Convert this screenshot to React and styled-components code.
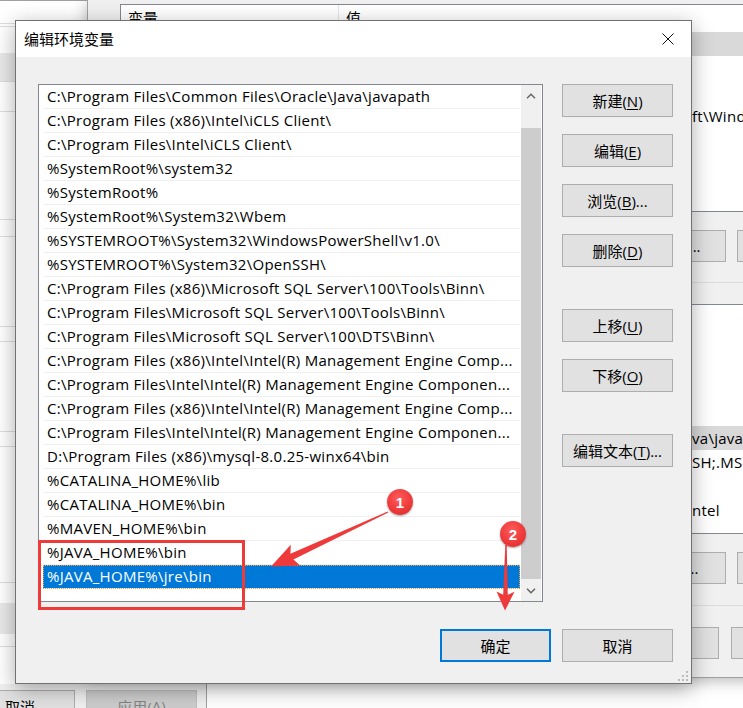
import React from "react";
import styled, { createGlobalStyle } from "styled-components";

const GlobalStyle = createGlobalStyle`
  html, body {
    margin: 0;
    padding: 0;
    background: #fff;
  }
  body {
    font-family: "Open Sans", "Noto Sans CJK SC", sans-serif;
    font-size: 15px;
    color: #000;
  }
  * {
    box-sizing: border-box;
  }
`;

const paths = [
  "C:\\Program Files\\Common Files\\Oracle\\Java\\javapath",
  "C:\\Program Files (x86)\\Intel\\iCLS Client\\",
  "C:\\Program Files\\Intel\\iCLS Client\\",
  "%SystemRoot%\\system32",
  "%SystemRoot%",
  "%SystemRoot%\\System32\\Wbem",
  "%SYSTEMROOT%\\System32\\WindowsPowerShell\\v1.0\\",
  "%SYSTEMROOT%\\System32\\OpenSSH\\",
  "C:\\Program Files (x86)\\Microsoft SQL Server\\100\\Tools\\Binn\\",
  "C:\\Program Files\\Microsoft SQL Server\\100\\Tools\\Binn\\",
  "C:\\Program Files\\Microsoft SQL Server\\100\\DTS\\Binn\\",
  "C:\\Program Files (x86)\\Intel\\Intel(R) Management Engine Comp...",
  "C:\\Program Files\\Intel\\Intel(R) Management Engine Componen...",
  "C:\\Program Files (x86)\\Intel\\Intel(R) Management Engine Comp...",
  "C:\\Program Files\\Intel\\Intel(R) Management Engine Componen...",
  "D:\\Program Files (x86)\\mysql-8.0.25-winx64\\bin",
  "%CATALINA_HOME%\\lib",
  "%CATALINA_HOME%\\bin",
  "%MAVEN_HOME%\\bin",
  "%JAVA_HOME%\\bin",
  "%JAVA_HOME%\\jre\\bin",
];

// faint stripes of the window sitting furthest back (only its left edge shows)
const leftStripes = [
  { h: 22, line: true },
  { h: 2, line: true },
  { h: 26 },
  { h: 28, gray: true, line: true },
  { h: 29, line: true },
  { h: 107, line: true },
  { h: 16, line: true },
  { h: 89, line: true },
  { h: 14, line: true },
  { h: 89, line: true },
  { h: 14, line: true },
  { h: 135, line: true },
  { h: 20 },
  { h: 31, gray: true },
  { h: 12, line: true },
  { h: 37 },
];

const Chevron = ({ up }) => (
  <svg width="10" height="6" viewBox="0 0 10 6">
    <polyline
      points={up ? "1,5.2 5,1.2 9,5.2" : "1,0.8 5,4.8 9,0.8"}
      fill="none"
      stroke="#606060"
      strokeWidth="1.4"
    />
  </svg>
);

const App = () => {
  return (
    <>
      <GlobalStyle />
      <Desktop>
        {/* window furthest back */}
        <BackWindow $left={-1} $top={0} $width={208} $height={730}>
          <StripePanel>
            {leftStripes.map((s, i) => (
              <Stripe key={i} $h={s.h} $gray={s.gray} $line={s.line} />
            ))}
          </StripePanel>
          <BackFooter $indent={-35}>
            <Button $w={110}>取消</Button>
            <Button $w={111} disabled>
              应用(<u>A</u>)
            </Button>
          </BackFooter>
        </BackWindow>

        {/* 环境变量 window */}
        <BackWindow $left={87} $top={-1} $width={700} $height={679} $shadow>
          <EnvContent>
            <ListView $top={4} $height={208}>
              <ListHeader>
                <HeaderCell $w={218}>变量</HeaderCell>
                <HeaderCell>值</HeaderCell>
              </ListHeader>
              <BgRow $selected />
              <BgRow />
              <BgRow />
              <BgRow>
                <Fragment $x={571}>ft\WindowsApps;</Fragment>
              </BgRow>
            </ListView>
            <BgButtonRow $top={18} $indent={375}>
              <Button $w={110}>新建(<u>N</u>)...</Button>
              <Button $w={110}>编辑(<u>E</u>)...</Button>
              <Button $w={110}>删除(<u>D</u>)</Button>
            </BgButtonRow>
            <Separator $top={20} />
            <ListView $top={21} $height={230}>
              <ListHeader $h={25}>
                <HeaderCell $w={218} />
                <HeaderCell />
              </ListHeader>
              <BgRow />
              <BgRow />
              <BgRow />
              <BgRow />
              <BgRow $selected>
                <Fragment $x={571}>va\javapath;C:\Program Files</Fragment>
              </BgRow>
              <BgRow>
                <Fragment $x={571}>SH;.MSC</Fragment>
              </BgRow>
              <BgRow />
              <BgRow>
                <Fragment $x={571}>ntel</Fragment>
              </BgRow>
            </ListView>
            <BgButtonRow $top={18} $indent={375}>
              <Button $w={110}>新建(<u>W</u>)...</Button>
              <Button $w={110}>编辑(<u>I</u>)...</Button>
              <Button $w={110}>删除(<u>L</u>)</Button>
            </BgButtonRow>
            <Separator $top={21} />
            <BgButtonRow $top={21} $indent={489} $gap={12}>
              <Button $w={110}>确定</Button>
              <Button $w={110}>取消</Button>
            </BgButtonRow>
          </EnvContent>
        </BackWindow>

        {/* 编辑环境变量 dialog */}
        <Dialog>
          <TitleBar>
            <Title>编辑环境变量</Title>
            <CloseBox>
              <svg width="12" height="12" viewBox="0 0 12 12">
                <path
                  d="M0.5 0.5 L11.5 11.5 M11.5 0.5 L0.5 11.5"
                  stroke="#111"
                  strokeWidth="1"
                />
              </svg>
            </CloseBox>
          </TitleBar>
          <Body>
            <MainRow>
              <PathList>
                <Rows>
                  {paths.map((p, i) => (
                    <PathRow key={i} $selected={i === paths.length - 1}>
                      {p}
                    </PathRow>
                  ))}
                </Rows>
                <ScrollBar>
                  <ScrollArrow>
                    <Chevron up />
                  </ScrollArrow>
                  <Thumb />
                  <ScrollArrow>
                    <Chevron />
                  </ScrollArrow>
                </ScrollBar>
              </PathList>
              <ButtonColumn>
                <Button>新建(<u>N</u>)</Button>
                <Button $top={17}>编辑(<u>E</u>)</Button>
                <Button $top={17}>浏览(<u>B</u>)...</Button>
                <Button $top={17}>删除(<u>D</u>)</Button>
                <Button $top={42}>上移(<u>U</u>)</Button>
                <Button $top={17}>下移(<u>O</u>)</Button>
                <Button $top={42}>编辑文本(<u>T</u>)...</Button>
              </ButtonColumn>
            </MainRow>
            <FooterRow>
              <Button $primary>确定</Button>
              <Button>取消</Button>
            </FooterRow>
          </Body>
          <Grip>
            <svg width="12" height="12" viewBox="0 0 12 12" fill="#bcbcbc">
              <rect x="9" y="1" width="2" height="2" />
              <rect x="5" y="5" width="2" height="2" />
              <rect x="9" y="5" width="2" height="2" />
              <rect x="1" y="9" width="2" height="2" />
              <rect x="5" y="9" width="2" height="2" />
              <rect x="9" y="9" width="2" height="2" />
            </svg>
          </Grip>
        </Dialog>

        {/* annotations */}
        <HighlightBox />
        <ArrowLayer width="743" height="708" viewBox="0 0 743 708">
          <polygon
            fill="#ee3a3a"
            points="388.3,512.6 293.4,559.6 300.2,565.4 271,566.5 290.8,544.8 290.4,553.8 387.7,511.4"
          />
          <polygon
            fill="#ee3a3a"
            points="506.7,545 507.8,594.8 514.5,591.8 505,610.5 496.5,591.5 503.2,594.7 505.3,545"
          />
        </ArrowLayer>
        <Badge $x={400} $y={502}>1</Badge>
        <Badge $x={513} $y={534}>2</Badge>
      </Desktop>
    </>
  );
};

export default App;

const Desktop = styled.div`
  position: relative;
  width: 743px;
  height: 708px;
  overflow: hidden;
  background: #fff;
`;

const BackWindow = styled.div`
  position: absolute;
  left: ${(p) => p.$left}px;
  top: ${(p) => p.$top}px;
  width: ${(p) => p.$width}px;
  height: ${(p) => p.$height}px;
  display: flex;
  flex-direction: column;
  background: #f0f0f0;
  border: 1px solid #a0a0a0;
  box-shadow: ${(p) =>
    p.$shadow ? "0 3px 14px rgba(0, 0, 0, 0.28)" : "none"};
`;

const StripePanel = styled.div`
  display: flex;
  flex-direction: column;
  background: #fff;
`;

const Stripe = styled.div`
  height: ${(p) => p.$h + (p.$line ? 1 : 0)}px;
  background: ${(p) => (p.$gray ? "#e9e9e9" : "#fff")};
  border-bottom: ${(p) => (p.$line ? "1px solid #dedede" : "none")};
`;

const BackFooter = styled.div`
  display: flex;
  gap: 11px;
  padding-top: 6px;
  margin-left: ${(p) => p.$indent}px;
`;

const EnvContent = styled.div`
  display: flex;
  flex-direction: column;
  padding-left: 32px;
`;

const ListView = styled.div`
  margin-top: ${(p) => p.$top}px;
  width: 660px;
  height: ${(p) => p.$height}px;
  flex-shrink: 0;
  overflow: hidden;
  background: #fff;
  border: 1px solid #828790;
`;

const ListHeader = styled.div`
  display: flex;
  height: ${(p) => p.$h || 27}px;
  background: #fff;
`;

const HeaderCell = styled.div`
  width: ${(p) => (p.$w ? `${p.$w}px` : "auto")};
  flex: ${(p) => (p.$w ? "none" : 1)};
  padding: 3px 0 0 7px;
  border-right: 1px solid #e5e5e5;
  line-height: 20px;
`;

const BgRow = styled.div`
  height: 24px;
  line-height: 24px;
  white-space: nowrap;
  letter-spacing: 0.28px;
  background: ${(p) => (p.$selected ? "#d9d9d9" : "#fff")};
`;

const Fragment = styled.span`
  display: block;
  padding-left: ${(p) => p.$x}px;
`;

const BgButtonRow = styled.div`
  display: flex;
  gap: ${(p) => p.$gap || 11}px;
  margin-top: ${(p) => p.$top}px;
  margin-left: ${(p) => p.$indent}px;
`;

const Separator = styled.div`
  margin-top: ${(p) => p.$top}px;
  height: 1px;
  background: #dcdcdc;
  margin-left: -32px;
`;

const Dialog = styled.div`
  position: absolute;
  left: 15px;
  top: 20px;
  width: 677px;
  height: 664px;
  display: flex;
  flex-direction: column;
  background: #f0f0f0;
  border: 1px solid #727272;
  box-shadow: 0 5px 20px rgba(0, 0, 0, 0.33);
`;

const TitleBar = styled.div`
  height: 36px;
  flex-shrink: 0;
  display: flex;
  align-items: center;
  justify-content: space-between;
  padding-left: 8px;
  background: #fff;
`;

const Title = styled.span`
  font-size: 15px;
  line-height: 20px;
`;

const CloseBox = styled.div`
  width: 46px;
  height: 36px;
  display: flex;
  align-items: center;
  justify-content: center;
`;

const Body = styled.div`
  display: flex;
  flex-direction: column;
  padding: 27px 18px 21px 22px;
`;

const MainRow = styled.div`
  display: flex;
  gap: 19px;
`;

const PathList = styled.div`
  width: 505px;
  height: 518px;
  display: flex;
  padding: 0 1px 0 4px;
  background: #fff;
  border: 1px solid #828790;
`;

const Rows = styled.div`
  flex: 1;
  min-width: 0;
  overflow: hidden;
`;

const PathRow = styled.div`
  height: 24px;
  line-height: 23px;
  padding-left: 4px;
  white-space: nowrap;
  overflow: hidden;
  letter-spacing: 0.28px;
  border-bottom: 1px solid #f0f0f0;
  color: ${(p) => (p.$selected ? "#fff" : "#000")};
  background: ${(p) => (p.$selected ? "#0078d7" : "#fff")};
  outline: ${(p) => (p.$selected ? "1px dotted #f0a63c" : "none")};
  outline-offset: -1px;
`;

const ScrollBar = styled.div`
  width: 20px;
  margin-left: 1px;
  display: flex;
  flex-direction: column;
  background: #f0f0f0;
`;

const ScrollArrow = styled.div`
  height: 21px;
  display: flex;
  align-items: center;
  justify-content: center;
`;

const Thumb = styled.div`
  margin: 22px 0 1px;
  height: 451px;
  background: #cdcdcd;
`;

const ButtonColumn = styled.div`
  display: flex;
  flex-direction: column;
  width: 111px;
`;

const Button = styled.button`
  width: ${(p) => p.$w || 111}px;
  height: ${(p) => (p.$w ? 32 : 33)}px;
  flex-shrink: 0;
  margin-top: ${(p) => p.$top || 0}px;
  padding: 0;
  display: flex;
  align-items: center;
  justify-content: center;
  font-family: inherit;
  font-size: 15px;
  white-space: nowrap;
  color: #000;
  background: #e1e1e1;
  border: ${(p) => (p.$primary ? "2px solid #0078d7" : "1px solid #adadad")};
  border-radius: 0;

  u {
    text-underline-offset: 2px;
  }

  &:disabled {
    color: #838383;
    background: #cccccc;
    border-color: #bfbfbf;
  }
`;

const FooterRow = styled.div`
  display: flex;
  justify-content: flex-end;
  gap: 11px;
  margin-top: 27px;
`;

const Grip = styled.div`
  position: absolute;
  right: 2px;
  bottom: 1px;
  width: 12px;
  height: 12px;
  display: flex;
`;

const HighlightBox = styled.div`
  position: absolute;
  left: 38px;
  top: 540px;
  width: 207px;
  height: 70px;
  border: 3px solid #ef3a3a;
  pointer-events: none;
`;

const ArrowLayer = styled.svg`
  position: absolute;
  left: 0;
  top: 0;
  pointer-events: none;
`;

const Badge = styled.div`
  position: absolute;
  left: ${(p) => p.$x - 13}px;
  top: ${(p) => p.$y - 13}px;
  width: 26px;
  height: 26px;
  border-radius: 50%;
  display: flex;
  align-items: center;
  justify-content: center;
  font-family: "Liberation Sans", Arial, sans-serif;
  font-weight: bold;
  font-size: 15px;
  color: #fff;
  background: radial-gradient(circle at 45% 35%, #ff5c5c 0%, #ee3a3a 55%, #d62a2a 100%);
  box-shadow: 0 1px 2px rgba(0, 0, 0, 0.35);
`;
